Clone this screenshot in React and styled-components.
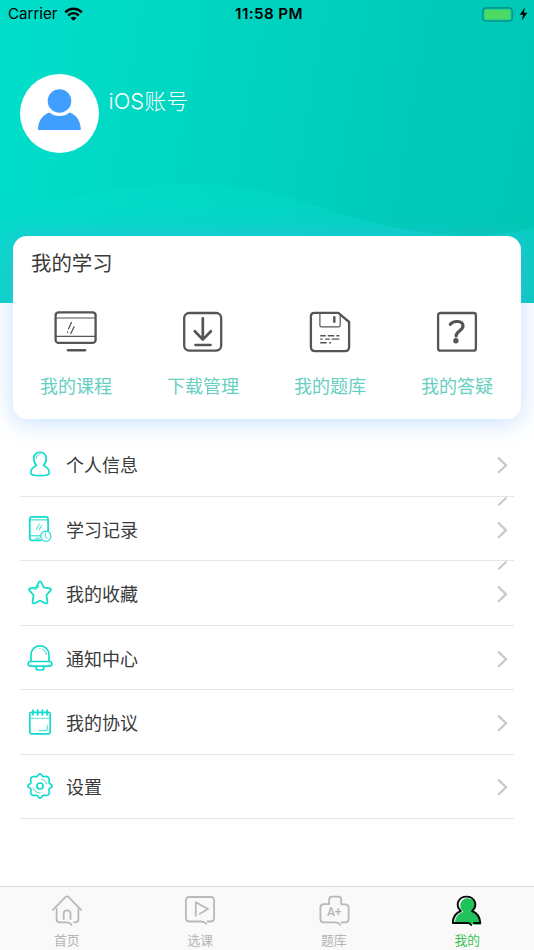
import React from 'react';
import styled, { createGlobalStyle } from 'styled-components';

const GlobalStyle = createGlobalStyle`
    *{
        box-sizing: border-box;
    }

    body{
        background-color: #fff;
        font-family: Inter, "Noto Sans CJK SC", sans-serif;
        margin: 0;
    }

    svg{
        display: block;
        flex: none;
        overflow: visible;
    }
`

const Screen = styled.div`
    background-color: #fff;
    display: flex;
    flex-direction: column;
    height: 950px;
    overflow: hidden;
    width: 534px;
`

const Header = styled.header`
    background: linear-gradient(100deg, #00ddc8 8%, #00cbb9 74%, #00c7b5 100%);
    flex: none;
    height: 303px;
    position: relative;
`

const Waves = styled.svg`
    bottom: 0;
    left: 0;
    position: absolute;
`

const StatusBar = styled.div`
    align-items: center;
    color: #000;
    display: grid;
    font-size: 15.1px;
    grid-template-columns: 1fr auto 1fr;
    height: 28px;
    line-height: 28px;
    padding: 0 6px 0 8px;
    position: relative;

    strong{
        font-size: 15.2px;
        font-weight: 600;
        letter-spacing: 0.4px;
        padding-left: 2px;
    }
`

const StatusGroup = styled.div`
    align-items: center;
    display: flex;
    gap: ${props => props.$gap}px;
    justify-content: ${props => (props.$end ? 'flex-end' : 'flex-start')};
`

const Profile = styled.div`
    display: flex;
    gap: 10px;
    padding: 45.5px 0 0 19.5px;
    position: relative;
`

const Avatar = styled.div`
    background-color: #fff;
    border-radius: 50%;
    height: 79px;
    width: 79px;
`

const UserName = styled.h1`
    color: #fff;
    font-size: 22px;
    font-weight: 300;
    line-height: 32px;
    margin: 11px 0 0;
`

const StudyCard = styled.section`
    background-color: #fff;
    border-radius: 14px;
    box-shadow: 0 3px 24px rgba(100, 172, 250, 0.38);
    flex: none;
    height: 183px;
    margin: -67px 13px 0;
    position: relative;

    h2{
        color: #3a3a3a;
        font-size: 20.4px;
        font-weight: 400;
        line-height: 30px;
        margin: 0;
        padding: 13px 0 0 18px;
    }
`

const Shortcuts = styled.div`
    display: grid;
    grid-template-columns: repeat(4, 1fr);
    margin: 0 0.4px 0 -0.4px;
    padding-top: 31px;
`

const Shortcut = styled.div`
    align-items: center;
    color: #66cfc0;
    display: flex;
    flex-direction: column;
    font-size: 18px;
    font-weight: 400;
    gap: 19px;
    line-height: 28px;
`

const Menu = styled.main`
    flex: 1;
    padding: 13.5px 20px 0;
`

const MenuRow = styled.div`
    align-items: center;
    border-bottom: 1px solid #e6e6e8;
    color: #3a3a3a;
    display: flex;
    font-size: 18px;
    font-weight: 400;
    height: 64.45px;
    padding: 1px 6px;
    position: relative;

    span{
        flex: 1;
        line-height: 28px;
        padding: 4px 0 0 12px;
    }
`

const Chevron = styled.svg`
    margin-top: 2px;
`

const ClippedArrow = styled.svg`
    position: absolute;
    right: 6px;
    top: 0;
`

const TabBar = styled.nav`
    background-color: #f9f9f9;
    border-top: 1px solid #d5d5d5;
    display: grid;
    flex: none;
    grid-template-columns: repeat(4, 1fr);
    height: 64px;
`

const Tab = styled.div`
    align-items: center;
    color: ${props => (props.$active ? '#3fc054' : '#b5b5b5')};
    display: flex;
    flex-direction: column;
    font-size: 12.8px;
    gap: 4px;
    line-height: 20px;
    padding-top: 8px;
`

const dark = { fill: 'none', stroke: '#555', strokeWidth: 2.3, strokeLinecap: 'round', strokeLinejoin: 'round' };
const teal = { fill: 'none', stroke: '#10dcca', strokeWidth: 1.7, strokeLinecap: 'round', strokeLinejoin: 'round' };
const grey = { fill: 'none', stroke: '#b9b9b9', strokeWidth: 1.8, strokeLinecap: 'round', strokeLinejoin: 'round' };

const CourseIcon = () => (
    <svg width="44" height="44" {...dark}>
        <rect x="1.6" y="2.3" width="40" height="30.6" rx="3" />
        <path d="M2 8H41M2 26.4H41" strokeWidth="1.1" />
        <path d="M17.4 12.6L14.6 18.8M13.6 21.9v.4M20.1 16.8L16.8 23.5" strokeWidth="1.3" />
        <path d="M14 40.3H31" strokeWidth="2.5" />
    </svg>
)

const DownloadIcon = () => (
    <svg width="44" height="44" {...dark}>
        <rect x="3.2" y="3" width="37" height="37.6" rx="5" />
        <path d="M21.8 8.4V29.6M13.8 21.3L21.8 29.6L29.9 21.3" strokeWidth="2.7" />
        <path d="M14.3 35H29.7" strokeWidth="2.3" />
    </svg>
)

const BankIcon = () => (
    <svg width="44" height="44" {...dark}>
        <path d="M6.3 2.8H30.3L41.1 12V36.8Q41.1 41.2 36.7 41.2H7.3Q2.9 41.2 2.9 36.8V6.2Q2.9 2.8 6.3 2.8Z" />
        <path d="M11.9 3V15.3Q11.9 16.9 13.5 16.9H30.7Q32.2 16.9 32.2 15.3V5" strokeWidth="1.2" />
        <path d="M26.3 7.3V11.7" strokeWidth="2.4" />
        <path d="M12.2 25.7h5.5m2 0h6.5m2.2 0h3M12.2 29.1h2.5m2.3 0h4.8m2 0h7.5M12.2 32.7h6.5m2.5 0h1.8" strokeWidth="1.4" strokeLinecap="butt" />
    </svg>
)

const QuestionIcon = () => (
    <svg width="44" height="44" {...dark}>
        <rect x="3.1" y="3" width="37.8" height="37.7" rx="2.3" />
        <path d="M15.3 14.4C18 10.4 28 10.2 28 16C28 20.5 21.2 21 21.1 26" strokeWidth="3.2" />
        <circle cx="20.9" cy="30.8" r="2.7" fill="#555" stroke="none" />
    </svg>
)

const PersonIcon = () => (
    <svg width="28" height="28" {...teal}>
        <path d="M10.5 15.6C8.7 13.8 7.8 11.3 7.8 8.5C7.8 4.6 10.5 2.3 14 2.3S20.2 4.6 20.2 8.5C20.2 11.3 19.3 13.8 17.5 15.6C21 17.2 23.3 19.8 23.3 22.9C23.3 24.8 19.4 25.6 14 25.6S4.7 24.8 4.7 22.9C4.7 19.8 7 17.2 10.5 15.6Z" />
        <path d="M10.3 8C10.5 6 11.7 4.9 13.3 4.7" strokeWidth="0.9" />
    </svg>
)

const RecordIcon = () => (
    <svg width="28" height="28" {...teal}>
        <path d="M22.1 16V3.9Q22.1 1.8 20 1.8H5.9Q3.8 1.8 3.8 3.9V23.2Q3.8 25.3 5.9 25.3H15" />
        <path d="M4 4.9H22M4 20.8H14" strokeWidth="1" />
        <path d="M13.2 9L10.4 14.4M15.6 10.5L13.3 15M9.5 23.2h4" strokeWidth="0.9" />
        <circle cx="19.8" cy="21.2" r="5.1" strokeWidth="1.1" fill="#fff" />
        <path d="M19.4 18.2V21.6L21.4 23" strokeWidth="0.9" />
    </svg>
)

const StarIcon = () => (
    <svg width="28" height="28" {...teal}>
        <path d="M12.7 3.4Q14 1.4 15.3 3.4L17.7 8.4L23.8 9.4Q26 10 24.5 11.7L20.4 16L21.4 22.7Q21.6 25.2 19.4 24.3L14 21.4L8.6 24.3Q6.4 25.2 6.6 22.7L7.6 16L3.5 11.7Q2 10 4.2 9.4L10.3 8.4Z" />
        <path d="M12.9 6.5C12.4 9 11.2 10.3 8.2 10.5" strokeWidth="0.9" />
    </svg>
)

const BellIcon = () => (
    <svg width="28" height="28" {...teal}>
        <path d="M5 17.4V11C5 5.4 8.8 1.9 14 1.9S23 5.4 23 11V17.4" />
        <rect x="2.1" y="17.5" width="23.8" height="4.6" rx="2.3" />
        <path d="M10.2 22.5V24Q10.2 26 12.2 26H15.8Q17.8 26 17.8 24V22.5" />
        <path d="M13.7 4.4h.4M16.3 5.2C18.7 6.2 20.1 8 20.5 10.5" strokeWidth="0.9" />
    </svg>
)

const NotebookIcon = () => (
    <svg width="28" height="28" {...teal}>
        <path d="M5.5 4.3Q3.8 4.3 3.8 6V23.8Q3.8 25.9 5.9 25.9H22.1Q24.2 25.9 24.2 23.8V6Q24.2 4.3 22.5 4.3H5.5M7 2V6.8M11.7 2V6.8M16.4 2V6.8M21 2V6.8" />
        <path d="M4.2 10.3H23.8" strokeWidth="0.9" opacity="0.75" />
        <path d="M13.3 22.6H20Q21.3 22.6 21.3 21V18.5M21.3 16.6v.3" strokeWidth="0.9" />
    </svg>
)

const GearIcon = () => (
    <svg width="28" height="28" {...teal}>
        <path d="M11.1 4.5C12.2 4.1 12 1.9 14 1.9S15.8 4.1 16.9 4.5C18.4 5.2 20.2 3.3 22.3 5.4C24.6 7.8 22.5 9.3 23.2 11.1C23.7 12.2 26.1 12.2 26.1 14S23.7 15.8 23.2 16.9C22.4 18.7 24.6 20.2 22.6 22.6C20.4 24.6 18.8 22.7 16.9 23.5C15.9 24 15.8 26.1 14 26.1S12.1 24 11.1 23.5C9.2 22.6 7.6 24.5 5.4 22.6C3.4 20.2 5.7 18.7 4.8 16.9C4.3 15.8 1.9 15.8 1.9 14S4.3 12.2 4.8 11.1C5.6 9.2 3.4 7.8 5.4 5.4C7.7 3.4 9.2 5.4 11.1 4.5Z" />
        <circle cx="14" cy="14" r="3" />
        <path d="M15.7 7.2C18.1 7.8 20 9.6 20.7 11.9M7.2 16.2C8.2 19.3 10.7 20.9 13.5 21" strokeWidth="0.9" />
    </svg>
)

const HomeIcon = () => (
    <svg width="32" height="32" {...grey}>
        <path d="M1.9 14.8L14.4 2.1Q16 .6 17.6 2.1L30.1 14.8" />
        <path d="M5.6 14V24.3Q5.6 27.4 8.7 27.4H15.3Q18.8 27.4 20.6 30" />
        <path d="M27.4 14V24.3Q27.4 27.3 24.3 27.3H23" />
        <path d="M12.7 24V18.6C12.7 14.3 19.5 14.3 19.5 18.6V24" />
    </svg>
)

const PlayIcon = () => (
    <svg width="32" height="32" {...grey}>
        <path d="M23.6 26.5H26.7Q30.1 26.5 30.1 23.2V5.3Q30.1 2 26.7 2H5.3Q1.9 2 1.9 5.3V23.2Q1.9 26.5 5.3 26.5H17Q20.4 26.4 22.3 28.7" />
        <path d="M11.8 20.8V7.2L24 14L15.8 18.8" />
    </svg>
)

const PaperIcon = () => (
    <svg width="32" height="32" {...grey}>
        <path d="M23.6 27.4H27.3Q30.6 27.4 30.6 24V12.5Q30.6 9.3 27.3 9.3H23.2V5Q23.2 1.7 19.9 1.7H14.4Q11.1 1.7 11.1 5V9.1H5.7Q2.4 9.1 2.4 12.5V24Q2.4 27.4 5.7 27.4H17.2Q20.6 27.4 22.4 29.8" />
        <text x="16.2" y="21.2" fontSize="12" style={{ fontFamily: 'Roboto' }} fontWeight="500" fill="#b5b5b5" stroke="none" textAnchor="middle">A+</text>
    </svg>
)

const MineIcon = () => (
    <svg width="32" height="32" fill="none" strokeLinecap="round" strokeLinejoin="round">
        <path d="M12.5 16.8C6.5 11.5 9.5 3.2 17 3.2C25 3.2 27 12 21.7 16.3C26.7 18.3 30 23 30.2 29.7H23L20 28.5H4C4 22.5 7 18.5 12.5 16.8Z" fill="#20c35b" />
        <path d="M23 28H29.3C29 22.2 26 18 21.1 16C27.5 10.3 23.7 1.6 15.5 1.6S3.7 10.3 9.8 16C5 18 1.8 22.2 1.8 28H16.3Q19 28 20.2 29.9" stroke="#080b09" strokeWidth="1.9" />
    </svg>
)

const shortcuts = [
    { label: '我的课程', Icon: CourseIcon },
    { label: '下载管理', Icon: DownloadIcon },
    { label: '我的题库', Icon: BankIcon },
    { label: '我的答疑', Icon: QuestionIcon },
];

const menuItems = [
    { label: '个人信息', Icon: PersonIcon },
    { label: '学习记录', Icon: RecordIcon, clipped: true },
    { label: '我的收藏', Icon: StarIcon, clipped: true },
    { label: '通知中心', Icon: BellIcon },
    { label: '我的协议', Icon: NotebookIcon },
    { label: '设置', Icon: GearIcon },
];

const tabs = [
    { label: '首页', Icon: HomeIcon },
    { label: '选课', Icon: PlayIcon },
    { label: '题库', Icon: PaperIcon },
    { label: '我的', Icon: MineIcon, active: true },
];

function App() {
    return (
        <>
            <GlobalStyle />
            <Screen>
                <Header>
                    <Waves width="534" height="123">
                        <defs>
                            <linearGradient id="waveFill" x1="0" y1="0" x2="0" y2="1">
                                <stop offset="0" stopColor="#00e5cf" stopOpacity="0.25" />
                                <stop offset="0.45" stopColor="#14d2ce" stopOpacity="0.5" />
                                <stop offset="1" stopColor="#14ccc6" stopOpacity="0.55" />
                            </linearGradient>
                        </defs>
                        <path d="M0 42C70 13 130 4 190 4C255 4 295 19 335 32C400 52 480 66 534 47V123H0Z" fill="url(#waveFill)" />
                    </Waves>
                    <StatusBar>
                        <StatusGroup $gap={7}>
                            Carrier
                            <svg width="19" height="14" fill="none" stroke="#000" strokeWidth="2.5">
                                <path d="M1.2 5.3C6 .6 13 .6 17.8 5.3" />
                                <path d="M4.2 8.5C7.3 5.6 11.7 5.6 14.8 8.5" />
                                <path d="M6.5 10.9C8.3 9.2 10.7 9.2 12.5 10.9L9.5 13.8Z" fill="#000" stroke="none" />
                            </svg>
                        </StatusGroup>
                        <strong>11:58 PM</strong>
                        <StatusGroup $gap={3} $end>
                            <svg width="34" height="15">
                                <rect x="0.8" y="0.8" width="29.4" height="13.4" rx="3.2" fill="none" stroke="#088b80" strokeWidth="1.2" />
                                <rect x="2.4" y="2.4" width="26.2" height="10.2" rx="1.6" fill="#4cd964" />
                                <path d="M32 5.3Q33.6 7.5 32 9.7Z" fill="#088b80" />
                            </svg>
                            <svg width="9" height="14">
                                <path d="M5.8.5L.8 7.8H4L2.9 13.5L8.3 5.8H4.9Z" fill="#000" />
                            </svg>
                        </StatusGroup>
                    </StatusBar>
                    <Profile>
                        <Avatar>
                            <svg width="79" height="79">
                                <path d="M18 56C18 47 22.5 41 29.5 38.5C34.5 43.3 44.5 43.3 49.5 38.5C56.5 41 60.8 47 60.8 56Z" fill="#409eff" />
                                <circle cx="39.5" cy="27" r="11.8" fill="#409eff" />
                            </svg>
                        </Avatar>
                        <UserName>iOS账号</UserName>
                    </Profile>
                </Header>
                <StudyCard>
                    <h2>我的学习</h2>
                    <Shortcuts>
                        {shortcuts.map(({ label, Icon }) => (
                            <Shortcut key={label}>
                                <Icon />
                                {label}
                            </Shortcut>
                        ))}
                    </Shortcuts>
                </StudyCard>
                <Menu>
                    {menuItems.map(({ label, Icon, clipped }) => (
                        <MenuRow key={label}>
                            {clipped && (
                                <ClippedArrow width="11" height="9">
                                    <path d="M1.3 8.2L9.6 .4" fill="none" stroke="#c7c7cc" strokeWidth="2" />
                                </ClippedArrow>
                            )}
                            <Icon />
                            <span>{label}</span>
                            <Chevron width="11" height="16" fill="none" stroke="#c7c7cc" strokeWidth="2.2">
                                <path d="M1.2 .6L9 8.2L1.2 15.8" />
                            </Chevron>
                        </MenuRow>
                    ))}
                </Menu>
                <TabBar>
                    {tabs.map(({ label, Icon, active }) => (
                        <Tab key={label} $active={active}>
                            <Icon />
                            {label}
                        </Tab>
                    ))}
                </TabBar>
            </Screen>
        </>
    )
}

export default App;
